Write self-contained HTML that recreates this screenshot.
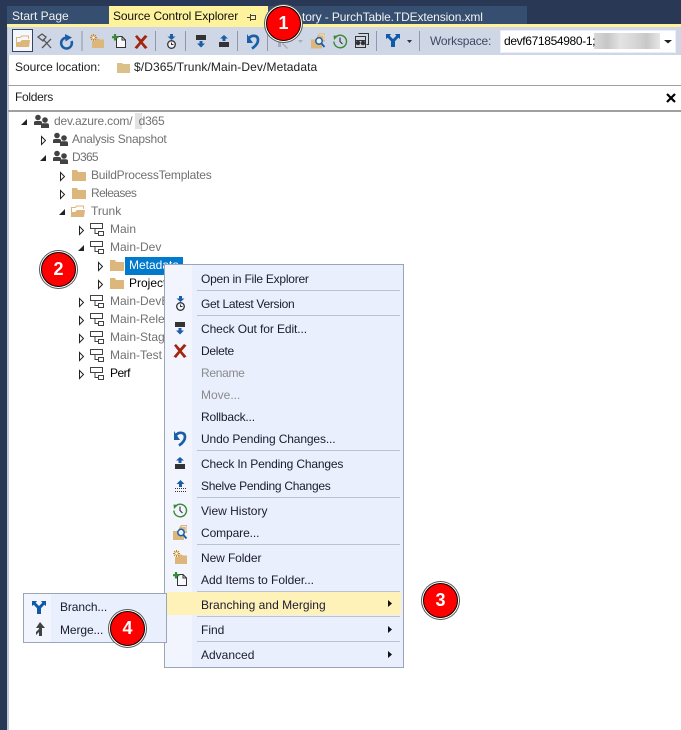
<!DOCTYPE html>
<html><head><meta charset="utf-8"><style>
html,body{margin:0;padding:0;background:#fff;width:681px;height:730px;overflow:hidden}
body{position:relative;font-family:"Liberation Sans",sans-serif;font-size:12px;color:#1e1e1e}
.b{position:absolute}
.t{position:absolute;white-space:nowrap;line-height:16px;height:16px}
.g{color:#717171}
.k{color:#000}
.m{color:#1b1b2f}
.d{color:#8a8a8a}
.s{position:absolute;left:197px;width:203px;height:1px;background:#bcc3d0}
.bd{position:absolute;width:33px;height:33px;border-radius:50%;background:#f00;border:1px solid #000;box-shadow:0 0 0 1px #fff,0 0 0 2px #555;color:#fff;font-weight:bold;font-size:18px;line-height:33px;text-align:center}
svg{position:absolute;left:0;top:0;overflow:visible}
</style></head><body>
<div class="b" style="left:0;top:0;width:681px;height:25px;background:#293955"></div>
<div class="b" style="left:0;top:0;width:7px;height:730px;background:#293955"></div>
<div class="b" style="left:7px;top:25px;width:2px;height:705px;background:#c3c8d2"></div>
<div class="b" style="left:7px;top:6px;width:102px;height:19px;background:#364e6f"></div>
<div class="b" style="left:109px;top:6px;width:159px;height:19px;background:#fff29d"></div>
<div class="b" style="left:268px;top:6px;width:259px;height:19px;background:#364e6f"></div>
<div class="b" style="left:7px;top:24px;width:674px;height:3px;background:#fff29d"></div>
<div class="b" style="left:8px;top:27px;width:673px;height:28px;background:#cfd6e5"></div>
<div class="b" style="left:12px;top:29px;width:19px;height:21px;border:1px solid #2f4468;background:#f5f7fd"></div>
<div class="b" style="left:8px;top:85px;width:673px;height:1px;background:#a0a0a0"></div>
<div class="b" style="left:8px;top:110px;width:673px;height:2px;background:#a0a0a0"></div>
<div class="b" style="left:500px;top:30px;width:174px;height:21px;background:#fff;border:1px solid #e8eefb"></div>
<div class="b" style="left:594px;top:33px;width:66px;height:16px;background:linear-gradient(90deg,#d9d9d9,#c6c6c6 20%,#e3e3e3 40%,#d8d8d8 60%,#c8c8c8 80%,#e6e6e6)"></div>
<div class="b" style="left:135px;top:113px;width:7px;height:16px;background:#e2e2e2"></div>

<div class="b" style="left:125px;top:257px;width:58px;height:18px;background:#007acc"></div>

<span class="t" style="left:12px;top:8px;color:#f1f1f1">Start Page</span>
<span class="t" style="left:113px;top:8px;color:#111;letter-spacing:-.13px">Source Control Explorer</span>
<span class="t" style="left:302px;top:9px;color:#f1f1f1;letter-spacing:-.12px">tory - PurchTable.TDExtension.xml</span>
<span class="t" style="left:430px;top:33px;color:#3c4a63;letter-spacing:-.2px">Workspace:</span>
<span class="t k" style="left:504px;top:33px;letter-spacing:-.35px">devf671854980-1;</span>
<span class="t" style="left:15px;top:59px;letter-spacing:-.05px">Source location:</span>
<span class="t" style="left:134px;top:59px;letter-spacing:.1px">$/D365/Trunk/Main-Dev/Metadata</span>
<span class="t" style="left:15px;top:89px;letter-spacing:-.3px">Folders</span>

<span class="t g" style="left:54px;top:113px;letter-spacing:-.2px">dev.azure.com/&nbsp;&nbsp;d365</span>
<span class="t g" style="left:72px;top:131px;letter-spacing:-.25px">Analysis Snapshot</span>
<span class="t g" style="left:72px;top:149px;letter-spacing:-.7px">D365</span>
<span class="t g" style="left:91px;top:167px;letter-spacing:-.2px">BuildProcessTemplates</span>
<span class="t g" style="left:91px;top:185px;letter-spacing:-.6px">Releases</span>
<span class="t g" style="left:91px;top:203px">Trunk</span>
<span class="t g" style="left:110px;top:221px">Main</span>
<span class="t g" style="left:110px;top:239px">Main-Dev</span>
<span class="t" style="left:129px;top:257px;color:#fff">Metadata</span>
<span class="t k" style="left:129px;top:275px">Projects</span>
<span class="t g" style="left:110px;top:293px">Main-DevBuild</span>
<span class="t g" style="left:110px;top:311px">Main-Release</span>
<span class="t g" style="left:110px;top:329px">Main-Stage</span>
<span class="t g" style="left:110px;top:347px">Main-Test</span>
<span class="t k" style="left:110px;top:365px;letter-spacing:-.5px">Perf</span>

<!-- context menu -->
<div class="b" style="left:164px;top:264px;width:238px;height:402px;border:1px solid #9aa5b8;background:#e9effd"></div>
<div class="b" style="left:165px;top:265px;width:27px;height:402px;background:#f2f5fe"></div>
<div class="s" style="top:290px"></div>
<div class="s" style="top:315px"></div>
<div class="s" style="top:450px"></div>
<div class="s" style="top:497px"></div>
<div class="s" style="top:544px"></div>
<div class="s" style="top:591px"></div>
<div class="s" style="top:616px"></div>
<div class="s" style="top:641px"></div>
<div class="b" style="left:167px;top:592px;width:234px;height:23px;background:#fff2b9"></div>
<span class="t m" style="left:201px;top:271px;letter-spacing:-.24px">Open in File Explorer</span>
<span class="t m" style="left:201px;top:296px;letter-spacing:-.3px">Get Latest Version</span>
<span class="t m" style="left:201px;top:321px;letter-spacing:-.1px">Check Out for Edit...</span>
<span class="t m" style="left:201px;top:343px;letter-spacing:-.3px">Delete</span>
<span class="t d" style="left:201px;top:365px;letter-spacing:-.3px">Rename</span>
<span class="t d" style="left:201px;top:387px">Move...</span>
<span class="t m" style="left:201px;top:409px;letter-spacing:-.2px">Rollback...</span>
<span class="t m" style="left:201px;top:431px;letter-spacing:-.13px">Undo Pending Changes...</span>
<span class="t m" style="left:201px;top:456px;letter-spacing:-.16px">Check In Pending Changes</span>
<span class="t m" style="left:201px;top:478px;letter-spacing:-.27px">Shelve Pending Changes</span>
<span class="t m" style="left:201px;top:503px">View History</span>
<span class="t m" style="left:201px;top:525px;letter-spacing:-.1px">Compare...</span>
<span class="t m" style="left:201px;top:550px;letter-spacing:-.1px">New Folder</span>
<span class="t m" style="left:201px;top:572px;letter-spacing:-.05px">Add Items to Folder...</span>
<span class="t m" style="left:201px;top:597px;letter-spacing:.03px">Branching and Merging</span>
<span class="t m" style="left:201px;top:622px">Find</span>
<span class="t m" style="left:201px;top:647px">Advanced</span>

<!-- submenu -->
<div class="b" style="left:23px;top:593px;width:142px;height:48px;border:1px solid #9aa5b8;background:#e9effd"></div>
<div class="b" style="left:24px;top:594px;width:27px;height:48px;background:#f2f5fe"></div>
<span class="t m" style="left:60px;top:599px;letter-spacing:-.1px">Branch...</span>
<span class="t m" style="left:60px;top:622px;letter-spacing:-.1px">Merge...</span>

<svg width="681" height="730" viewBox="0 0 681 730">
<defs>
<g id="f"><path d="M0 1h5l1 2h8v9H0z" fill="#dcb67a"/></g>
<g id="fo"><path d="M.5 10V2.500h4l1-1.500h7v3" fill="none" stroke="#dcb67a"/><path d="M0 12V7h4l2-2h8l-1 7z" fill="#dcb67a"/></g>
<g id="tm" fill="#424242"><circle cx="4" cy="3.500" r="2.800"/><path d="M0 11V8.500Q0 7 2 7h4q2 0 2 1.500V11z"/><circle cx="11" cy="6" r="2.800"/><path d="M7 14v-3q0-1.800 2-1.800h4q2 0 2 1.800v3z"/></g>
<g id="sv" fill="none" stroke="#424242"><path d="M.5 1.500h12v5H.5zM8.500 9.500h5v4h-5zM5 6.500v5h3.500"/></g>
<path id="ex" d="M.5.500l4 4-4 4z" fill="#fff" stroke="#222"/>
<path id="co" d="M6 0v6H0z" fill="#222"/>
<path id="ar" d="M0 0l4 3.500-4 3.500z" fill="#111"/>
<g id="ck"><rect width="10" height="5" fill="#333"/><path d="M3.500 6h3v2.500h2.500L5 12.500 1 8.500h2.500z" fill="#1a5ea8"/></g>
<g id="ci"><rect y="7" width="10" height="5" fill="#333"/><path d="M3.500 6h3V3.500h2.500L5 0 1 3.500h2.500z" fill="#1a5ea8"/></g>
<g id="gl"><path d="M5.500 0h3v2.500H11L7 6 3 2.500h2.500z" fill="#1a5ea8"/><circle cx="7" cy="10.500" r="3.800" fill="#f2f5fe" stroke="#333" stroke-width="1.300"/><path d="M7 8.500v2h2" fill="none" stroke="#333"/></g>
<path id="x" d="M1 1.500L3 0l4 4.500L11 0l2.500 1.500L8.700 7l4.800 5.500-2.500 1.500-4-5-4 5L.5 12.500 5.300 7z" fill="#a1260d"/>
<g id="un"><path d="M2 4Q4 1.800 6.500 1.800 11 1.800 11 6q0 4.500-6 8.500" fill="none" stroke="#1a5ea8" stroke-width="2.700"/><path d="M0 0l6 9H0z" fill="#1a5ea8"/></g>
<g id="hi"><path d="M2.800 3A6.300 6.300 0 1 1 .9 7.500" fill="none" stroke="#388a34" stroke-width="1.400"/><path d="M.5 1.500L5 2 1 6z" fill="#388a34"/><path d="M7 3.500v4l2.500 2.500" fill="none" stroke="#333" stroke-width="1.100"/></g>
<g id="cp"><path d="M6 3l2-3h6v8h-3v7H0V6h6z" fill="#dcb67a"/><path d="M8.500 1.500h4.500v5" fill="none" stroke="#f2f5fe" stroke-width=".7"/><circle cx="8" cy="7.500" r="3.200" fill="#eaf0fd" stroke="#1a5ea8" stroke-width="1.500"/><path d="M10.500 10L13.500 13.500" stroke="#1a5ea8" stroke-width="1.900"/></g>
<g id="nf"><path d="M5 4.500h3.500L10 5.500h4V14H2V7h3z" fill="#dcb67a"/><path d="M3.500 0v7M0 3.500h7M1 1l5 5M6 1L1 6" stroke="#c9861f" stroke-width="1"/><circle cx="3.500" cy="3.500" r="1.300" fill="#fff"/></g>
<g id="ad"><path d="M4.500 2.500h5.500l3.500 3.500v7.500h-9z" fill="#f6f8fe" stroke="#333"/><path d="M10 2.500v3.500h3.500" fill="none" stroke="#333"/><path d="M3 0v6.500M0 3.200h6.500" stroke="#388a34" stroke-width="2.200"/></g>
<path id="br" d="M0 0h5L3.700 1.800 7 5 10.300 1.800 9 0h5v5l-1.700-1.300L9 7.200V13H5V7.200L1.700 3.700 0 5z" fill="#0f5ba8"/>
</defs>

<!-- tab pin -->
<path d="M247 17.500h3M250.500 14v7M251 15.500h4.500v4H251" fill="none" stroke="#444" stroke-width="1"/>
<!-- toolbar -->
<use href="#fo" x="16" y="35"/>
<g stroke="#555" fill="none" stroke-width="1.300"><path d="M38 37l4-3 4 3-3 4zM43 39l8 9M51 39l-9 9"/></g>
<path d="M66 37.700A5.400 5.400 0 1 0 71.500 41" fill="none" stroke="#1a5ea8" stroke-width="2.500"/>
<path d="M65 34l7 3.500-6.500 4z" fill="#1a5ea8"/>
<use href="#nf" x="90" y="34"/>
<use href="#ad" x="112" y="34"/>
<use href="#x" x="134" y="35"/>
<use href="#gl" x="164.500" y="34"/>
<use href="#ck" x="196" y="35"/>
<use href="#ci" x="219" y="35"/>
<use href="#un" x="247" y="34"/>
<g fill="#a8adb8"><path d="M278 36h11v3h-11zM278 40h3v7h-3zM283 43l5 5-1 1-5-5z"/><path d="M298 40h5l-2.500 3z"/></g>
<use href="#cp" x="311" y="33.500"/>
<use href="#hi" x="333" y="34"/>
<g fill="none" stroke="#333"><path d="M358.500 33.500h10v11h-2M355.500 36.500h10v11h-10zM356 40.500h9"/><circle cx="358" cy="43" r="1.800" fill="#333"/><circle cx="363" cy="43" r="1.800" fill="#333"/></g>
<use href="#br" x="386" y="34"/>
<path d="M407 40h5l-2.500 3z" fill="#333"/>
<path d="M664 40h8l-4 3.500z" fill="#222"/>
<g fill="#8e98a8"><rect x="81.500" y="31" width="1" height="20"/><rect x="155" y="31" width="1" height="20"/><rect x="185" y="31" width="1" height="20"/><rect x="237" y="31" width="1" height="20"/><rect x="267" y="31" width="1" height="20"/><rect x="376" y="31" width="1" height="20"/><rect x="419" y="31" width="1" height="20"/></g>
<path d="M117 63h5l1 1h7v9h-13z" fill="#dcc08a"/>
<path d="M667 94l8 8M675 94l-8 8" stroke="#000" stroke-width="2.200"/>

<!-- tree -->
<use href="#co" x="21" y="119"/><use href="#tm" x="34" y="114"/>
<use href="#ex" x="41" y="136"/><use href="#tm" x="53" y="132"/>
<use href="#co" x="40" y="155"/><use href="#tm" x="53" y="150"/>
<use href="#ex" x="60" y="172"/><use href="#f" x="72" y="169"/>
<use href="#ex" x="60" y="190"/><use href="#f" x="72" y="187"/>
<use href="#co" x="59" y="209"/><use href="#fo" x="71" y="205"/>
<use href="#ex" x="79" y="226"/><use href="#sv" x="90" y="222"/>
<use href="#co" x="78" y="245"/><use href="#sv" x="90" y="240"/>
<use href="#ex" x="98" y="262"/><use href="#f" x="110" y="259"/>
<use href="#ex" x="98" y="280"/><use href="#f" x="110" y="277"/>
<use href="#ex" x="79" y="298"/><use href="#sv" x="90" y="294"/>
<use href="#ex" x="79" y="316"/><use href="#sv" x="90" y="312"/>
<use href="#ex" x="79" y="334"/><use href="#sv" x="90" y="330"/>
<use href="#ex" x="79" y="352"/><use href="#sv" x="90" y="348"/>
<use href="#ex" x="79" y="370"/><use href="#sv" x="90" y="366"/>

<!-- menu icons -->
<use href="#gl" x="173.500" y="296"/>
<use href="#ck" x="175" y="322"/>
<use href="#x" x="173" y="344"/>
<use href="#un" x="174" y="431"/>
<use href="#ci" x="175" y="457"/>
<path d="M180.500 480l4 4h-2.500v3h-3v-3h-2.500z" fill="#1a5ea8"/><path d="M175 488.500h11M175 491.500h11" stroke="#333" stroke-dasharray="1 1"/>
<use href="#hi" x="173" y="503"/>
<use href="#cp" x="173" y="525"/>
<use href="#nf" x="173" y="550"/>
<use href="#ad" x="173" y="572"/>
<use href="#ar" x="388" y="600"/>
<use href="#ar" x="388" y="626"/>
<use href="#ar" x="388" y="651"/>
<use href="#br" x="32" y="601"/>
<path d="M40 622l5 6h-3v8h-3v-4l-3 3v-3l3-3v-1h-3z" fill="#424242"/>
</svg>

<div class="bd" style="left:266px;top:6px">1</div>
<div class="bd" style="left:41px;top:252px">2</div>
<div class="bd" style="left:423px;top:583px">3</div>
<div class="bd" style="left:110px;top:611px">4</div>
</body></html>
